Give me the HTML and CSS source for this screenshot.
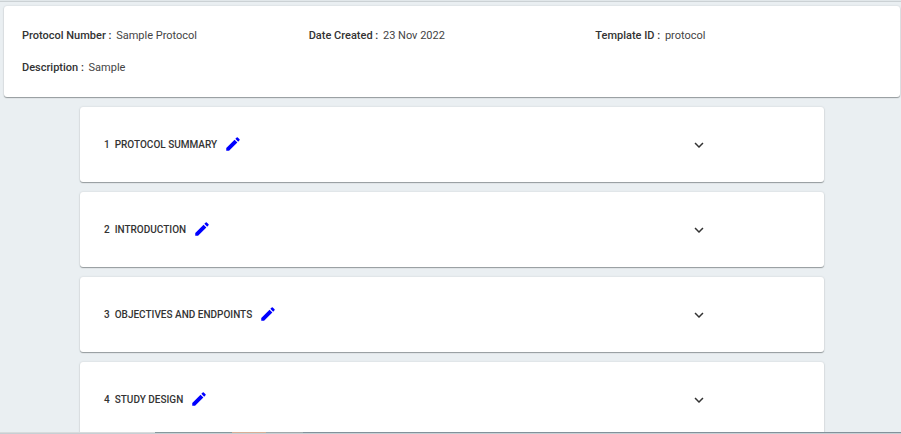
FILE: index.html
```html
<!DOCTYPE html>
<html lang="en">
<head>
<meta charset="utf-8">
<title>Sample Protocol</title>
<link rel="stylesheet" href="styles.css">
</head>
<body>
<svg class="symbols" aria-hidden="true">
  <symbol id="pencil" viewBox="0 0 24 24"><path d="M3 17.25V21h3.75L17.81 9.94l-3.75-3.75L3 17.25zM20.71 7.04a1 1 0 0 0 0-1.41l-2.34-2.34a1 1 0 0 0-1.41 0l-1.83 1.83 3.75 3.75 1.83-1.83z"/></symbol>
  <symbol id="chevron" viewBox="0 0 24 24"><path d="M16.59 8.59 12 13.17 7.41 8.59 6 10l6 6 6-6z"/></symbol>
</svg>
<div class="topline"></div>
<main class="page">
  <dl class="card details">
    <div><dt>Protocol Number :</dt> <dd>Sample Protocol</dd></div>
    <div><dt>Date Created :</dt> <dd>23 Nov 2022</dd></div>
    <div><dt>Template ID :</dt> <dd>protocol</dd></div>
    <div><dt>Description :</dt> <dd>Sample</dd></div>
  </dl>
  <div class="sections">
    <section class="card section">
      <h2><span class="number">1</span>PROTOCOL SUMMARY</h2>
      <button class="edit" type="button" aria-label="Edit protocol summary"><svg><use href="#pencil"/></svg></button>
      <button class="toggle" type="button" aria-label="Expand protocol summary"><svg><use href="#chevron"/></svg></button>
    </section>
    <section class="card section">
      <h2><span class="number">2</span>INTRODUCTION</h2>
      <button class="edit" type="button" aria-label="Edit introduction"><svg><use href="#pencil"/></svg></button>
      <button class="toggle" type="button" aria-label="Expand introduction"><svg><use href="#chevron"/></svg></button>
    </section>
    <section class="card section">
      <h2><span class="number">3</span>OBJECTIVES AND ENDPOINTS</h2>
      <button class="edit" type="button" aria-label="Edit objectives and endpoints"><svg><use href="#pencil"/></svg></button>
      <button class="toggle" type="button" aria-label="Expand objectives and endpoints"><svg><use href="#chevron"/></svg></button>
    </section>
    <section class="card section">
      <h2><span class="number">4</span>STUDY DESIGN</h2>
      <button class="edit" type="button" aria-label="Edit study design"><svg><use href="#pencil"/></svg></button>
      <button class="toggle" type="button" aria-label="Expand study design"><svg><use href="#chevron"/></svg></button>
    </section>
  </div>
</main>
<div class="strip"></div>
</body>
</html>
```
FILE: styles.css
```css
* { box-sizing: border-box; }

body {
  display: flex;
  flex-direction: column;
  height: 100vh;
  margin: 0;
  overflow: hidden;
  background: #eaeff2;
  color: #333;
  font-family: Roboto, sans-serif;
  font-size: 11px;
  line-height: 16px;
}

.symbols { display: none; }

.topline {
  flex: none;
  height: 2px;
  background: #cbd1d4;
  border-top: 1px solid #e1e7ea;
}

.page {
  flex: 1;
  min-height: 0;
  padding: 4px 1px 0 4px;
  overflow: hidden;
}

.card {
  background: #fff;
  border-radius: 3px;
  box-shadow: 0 1px 1px #949a9d, 0 0 2px #c8cdd0;
}

.details {
  display: grid;
  grid-template-columns: repeat(3, 1fr);
  row-gap: 16px;
  margin: 0;
  padding: 22px 18px 21px;
}

.details dt,
.details dd {
  display: inline;
  margin: 0;
}

.details dt { font-weight: 500; }

.details dd {
  margin-left: 2px;
  color: #444;
}

.sections {
  display: flex;
  flex-direction: column;
  gap: 10px;
  margin: 10px 76px 0;
}

.section {
  display: flex;
  align-items: center;
  padding: 28px 116px 27px 24px;
}

.section h2 {
  margin: 0;
  font-size: 10px;
  font-weight: 500;
}

.number { margin-right: 5px; }

button {
  display: flex;
  padding: 0;
  border: 0;
  background: none;
  color: inherit;
}

svg {
  width: 18px;
  height: 18px;
  fill: currentColor;
}

.edit {
  margin-left: 7px;
  padding-bottom: 2px;
  color: #00f;
}

.toggle { margin-left: auto; }

.strip {
  flex: none;
  height: 2px;
  border-bottom: 1px solid #c7cfd4;
  background: linear-gradient(to right, #d8dbdc 155px, #87989c 155px 232px, #d8ae95 232px 266px, #a1a9ab 266px 303px, #83919a 303px);
}
```
